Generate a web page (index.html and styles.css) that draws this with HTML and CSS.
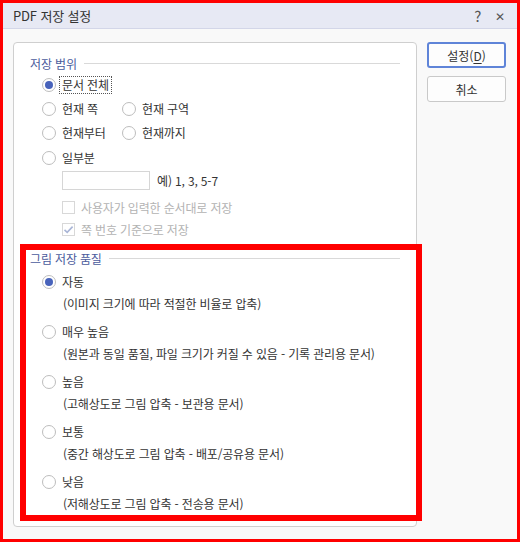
FILE: index.html
```html
<!DOCTYPE html>
<html lang="ko">
<head>
<meta charset="utf-8">
<title>PDF 저장 설정</title>
<link rel="stylesheet" href="styles.css">
</head>
<body>
  <div class="dialog">
    <div class="titlebar">
      <span class="title">PDF 저장 설정</span>
      <span class="tb-btn help">?</span>
      <span class="tb-btn close">&#x2715;</span>
    </div>

    <div class="body">
      <div class="panel">
        <!-- 저장 범위 -->
        <div class="legend first"><span>저장 범위</span></div>
        <div class="range">
          <div class="opt"><span class="radio on"></span><span class="lbl focus">문서 전체</span></div>
          <div class="opt-row">
            <div class="opt"><span class="radio"></span><span class="lbl">현재 쪽</span></div>
            <div class="opt"><span class="radio"></span><span class="lbl">현재 구역</span></div>
          </div>
          <div class="opt-row">
            <div class="opt"><span class="radio"></span><span class="lbl">현재부터</span></div>
            <div class="opt"><span class="radio"></span><span class="lbl">현재까지</span></div>
          </div>
          <div class="opt part"><span class="radio"></span><span class="lbl">일부분</span></div>
          <div class="pages">
            <span class="field"></span>
            <span class="hint">예) 1, 3, 5-7</span>
          </div>
          <div class="check top"><span class="box"></span><span>사용자가 입력한 순서대로 저장</span></div>
          <div class="check"><span class="box checked">
            <svg viewBox="0 0 13 13" width="13" height="13"><path d="M2.5 6.8 L5.2 9.4 L10.6 3.6" fill="none" stroke="#a9b5d6" stroke-width="1.6"/></svg>
          </span><span>쪽 번호 기준으로 저장</span></div>
        </div>

        <!-- 그림 저장 품질 -->
        <div class="legend second"><span>그림 저장 품질</span></div>
        <div class="quality">
          <div class="q">
            <div class="opt"><span class="radio on"></span><span class="lbl">자동</span></div>
            <div class="desc">(이미지 크기에 따라 적절한 비율로 압축)</div>
          </div>
          <div class="q">
            <div class="opt"><span class="radio"></span><span class="lbl">매우 높음</span></div>
            <div class="desc">(원본과 동일 품질, 파일 크기가 커질 수 있음 - 기록 관리용 문서)</div>
          </div>
          <div class="q">
            <div class="opt"><span class="radio"></span><span class="lbl">높음</span></div>
            <div class="desc">(고해상도로 그림 압축 - 보관용 문서)</div>
          </div>
          <div class="q">
            <div class="opt"><span class="radio"></span><span class="lbl">보통</span></div>
            <div class="desc">(중간 해상도로 그림 압축 - 배포/공유용 문서)</div>
          </div>
          <div class="q">
            <div class="opt"><span class="radio"></span><span class="lbl">낮음</span></div>
            <div class="desc">(저해상도로 그림 압축 - 전송용 문서)</div>
          </div>
        </div>

        <div class="highlight"></div>
      </div>

      <div class="buttons">
        <button class="btn primary">설정(<u>D</u>)</button>
        <button class="btn">취소</button>
      </div>
    </div>
  </div>
</body>
</html>
```

FILE: styles.css
```css
* { box-sizing: border-box; }

body {
  margin: 0;
  font-family: "Noto Sans CJK KR", "Noto Sans", sans-serif;
  font-size: 12px;
  letter-spacing: -0.15px;
  color: #333;
}

.dialog {
  width: 520px;
  height: 542px;
  border: 3px solid #ff0000;
  background: #f9f9f9;
  display: flex;
  flex-direction: column;
}

/* Title bar */
.titlebar {
  height: 26px;
  flex: none;
  display: flex;
  align-items: center;
  padding: 0 12px 0 10px;
  background: #e7e9f4;
  border-bottom: 1px solid #d3d6e8;
}
.title {
  flex: 1;
  font-size: 13px;
  color: #333;
}
.tb-btn {
  color: #555;
  font-size: 14px;
  line-height: 1;
}
.help { margin-right: 14px; font-size: 15px; }
.close { font-size: 12px; }

/* Body */
.body {
  flex: 1;
  display: flex;
  gap: 10px;
  padding: 13px 11px 12px 10px;
}

.panel {
  position: relative;
  width: 404px;
  border: 1px solid #cfcfcf;
  border-radius: 4px;
  background: #fff;
  padding: 12px 16px 0 16px;
}

.legend {
  display: flex;
  align-items: center;
  height: 16px;
  color: #4b5c9d;
}
.legend::after {
  content: "";
  flex: 1;
  height: 1px;
  background: #d9d9d9;
  margin-left: 7px;
}
.legend.second { margin-top: 10px; }

.range {
  padding-left: 12px;
  margin-top: 2px;
}

.opt {
  display: flex;
  align-items: center;
  height: 24px;
}
.opt-row {
  display: grid;
  grid-template-columns: 80px auto;
}
.part { margin-top: 1px; }

.radio {
  position: relative;
  width: 14px;
  height: 14px;
  border: 1px solid #bdbdbd;
  border-radius: 50%;
  background: #fff;
  flex: none;
}
.radio.on::after {
  content: "";
  position: absolute;
  left: 2px;
  top: 2px;
  width: 8px;
  height: 8px;
  border-radius: 50%;
  background: #4863bb;
}

.lbl {
  margin-left: 3px;
  padding: 0 2px;
  border: 1px dotted transparent;
  line-height: 16px;
}
.lbl.focus { border-color: #555; }

.pages {
  display: flex;
  align-items: center;
  gap: 7px;
  margin: 1px 0 0 20px;
}
.field {
  width: 88px;
  height: 19px;
  border: 1px solid #d6d6d6;
  background: #fff;
}

.check {
  display: flex;
  align-items: center;
  gap: 6px;
  height: 22px;
  margin-left: 20px;
  color: #b3b3b3;
}
.check.top { margin-top: 6px; }
.box {
  width: 13px;
  height: 13px;
  border: 1px solid #d8d8d8;
  background: #fff;
  display: flex;
  align-items: center;
  justify-content: center;
}
.box svg { flex: none; }

.quality {
  padding-left: 12px;
  margin-top: 4px;
}
.q { margin-bottom: 6px; }
.desc {
  height: 20px;
  line-height: 20px;
  margin-left: 21px;
}

/* annotation frame drawn over the picture-quality group */
.highlight {
  position: absolute;
  left: 6px;
  top: 201px;
  width: 402px;
  height: 277px;
  border: 6px solid #ff0000;
  pointer-events: none;
}

/* Buttons */
.buttons {
  display: flex;
  flex-direction: column;
  gap: 8px;
}
.btn {
  width: 79px;
  height: 26px;
  font: inherit;
  color: #333;
  background: #fdfdfd;
  border: 1px solid #c9c9c9;
  border-radius: 3px;
  padding: 0;
}
.btn.primary { border: 2px solid #5f84d8; }
.btn u { text-underline-offset: 2px; }
```
